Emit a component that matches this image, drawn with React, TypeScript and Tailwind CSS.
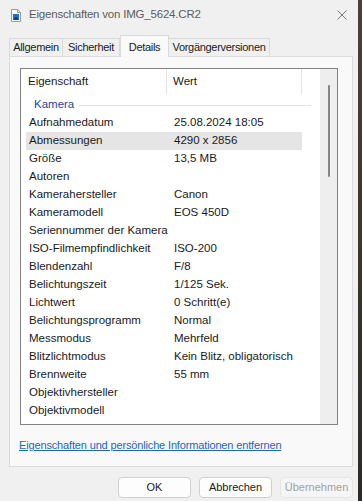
import React from 'react';

type Row = { name: string; value: string; selected?: boolean };

const rows: Row[] = [
  { name: 'Aufnahmedatum', value: '25.08.2024 18:05' },
  { name: 'Abmessungen', value: '4290 x 2856', selected: true },
  { name: 'Größe', value: '13,5 MB' },
  { name: 'Autoren', value: '' },
  { name: 'Kamerahersteller', value: 'Canon' },
  { name: 'Kameramodell', value: 'EOS 450D' },
  { name: 'Seriennummer der Kamera', value: '' },
  { name: 'ISO-Filmempfindlichkeit', value: 'ISO-200' },
  { name: 'Blendenzahl', value: 'F/8' },
  { name: 'Belichtungszeit', value: '1/125 Sek.' },
  { name: 'Lichtwert', value: '0 Schritt(e)' },
  { name: 'Belichtungsprogramm', value: 'Normal' },
  { name: 'Messmodus', value: 'Mehrfeld' },
  { name: 'Blitzlichtmodus', value: 'Kein Blitz, obligatorisch' },
  { name: 'Brennweite', value: '55 mm' },
  { name: 'Objektivhersteller', value: '' },
  { name: 'Objektivmodell', value: '' },
];

const tabs = [
  { label: 'Allgemein', w: 'w-[54px]' },
  { label: 'Sicherheit', w: 'w-[58px]' },
  { label: 'Details', w: 'w-[49px]', active: true },
  { label: 'Vorgängerversionen', w: 'w-[102px]' },
];

const FileIcon = () => (
  <svg width="10" height="13" viewBox="0 0 10 13">
    <path d="M0.5 0.5 H6.5 L9.5 3.5 V12.5 H0.5 Z" fill="#ffffff" stroke="#9a9a9a" />
    <path d="M6.5 0.5 V3.5 H9.5" fill="none" stroke="#9a9a9a" />
    <rect x="2" y="5" width="6" height="6" fill="#1d6fd0" />
    <path d="M2 11 L5 7.5 L8 11 Z" fill="#0b3f8a" />
  </svg>
);

const App: React.FC = () => {
  return (
    <div className="w-[362px] h-[501px] flex bg-[#3a342e] overflow-hidden font-['Liberation_Sans',sans-serif] text-[11.5px] text-[#1a1a1a]">
      <div className="w-[358px] h-full flex flex-col bg-[#f0f0f0]">
        {/* Title bar */}
        <div className="h-[30px] flex items-center pl-[11px] pr-[10px] shrink-0">
          <FileIcon />
          <span className="ml-[8px] text-[11.5px] tracking-[-0.2px] text-[#5c5c5c]">Eigenschaften von IMG_5624.CR2</span>
          <div className="flex-1" />
          <svg width="10" height="10" viewBox="0 0 10 10" className="mr-[1px]">
            <path d="M0.5 0.5 L9.5 9.5 M9.5 0.5 L0.5 9.5" stroke="#7a7a7a" strokeWidth="1" />
          </svg>
        </div>

        {/* Tabs */}
        <div className="h-[26px] flex items-end pl-[9px] shrink-0 text-[11px] tracking-[-0.3px]">
          {tabs.map((t) =>
            t.active ? (
              <div
                key={t.label}
                className={`${t.w} h-[22px] -mb-px relative z-10 flex items-start justify-center pt-[3px] bg-[#f9f9f9] border border-b-0 border-[#d9d9d9]`}
              >
                {t.label}
              </div>
            ) : (
              <div
                key={t.label}
                className={`${t.w} h-[18px] flex items-center justify-center bg-[#f0f0f0] border border-b-0 border-[#d9d9d9] -ml-px first:ml-0`}
              >
                {t.label}
              </div>
            )
          )}
        </div>

        {/* Panel */}
        <div className="ml-[9px] w-[344px] h-[411px] shrink-0 bg-[#f9f9f9] border border-[#dcdcdc] pl-[10px] pt-[11px]">
          <div className="w-[318px] h-[357px] border border-[#828282] bg-white flex">
            <div className="flex-1 flex flex-col">
              {/* Header */}
              <div className="h-[27px] flex items-start shrink-0">
                <div className="w-[146px] h-[25px] flex items-center pl-[7px] border-r border-[#e5e5e5]">Eigenschaft</div>
                <div className="w-[135px] h-[25px] flex items-center pl-[6px] border-r border-[#e5e5e5]">Wert</div>
              </div>
              {/* Group */}
              <div className="h-[18px] flex items-center pl-[13px] pr-[9px] shrink-0">
                <span className="text-[#24479c]">Kamera</span>
                <div className="flex-1 ml-[5px] h-px bg-[#e3e3e3]" />
              </div>
              {/* Rows */}
              <div className="pl-[5px] flex flex-col">
                {rows.map((r) => (
                  <div
                    key={r.name}
                    className={`w-[276px] h-[18px] flex items-center pl-[3px] ${r.selected ? 'bg-[#e5e5e5]' : ''}`}
                  >
                    <span className="w-[145px] whitespace-nowrap">{r.name}</span>
                    <span className="whitespace-nowrap">{r.value}</span>
                  </div>
                ))}
              </div>
            </div>
            {/* Scrollbar */}
            <div className="w-[17px] bg-[#eeeeee] flex justify-center pt-[16px]">
              <div className="w-[2px] h-[92px] rounded-full bg-[#858585]" />
            </div>
          </div>
          <div className="mt-[12px] -ml-[1px] text-[11px] tracking-[-0.15px]">
            <span className="text-[#1a66c2] underline">Eigenschaften und persönliche Informationen entfernen</span>
          </div>
        </div>

        {/* Buttons */}
        <div className="flex justify-end gap-[8px] pr-[5px] mt-[10px] text-[11px]">
          <div className="w-[73px] h-[21px] flex items-center justify-center rounded-[4px] bg-[#fdfdfd] border border-[#d0d0d0]">OK</div>
          <div className="w-[73px] h-[21px] flex items-center justify-center rounded-[4px] bg-[#fdfdfd] border border-[#d0d0d0]">Abbrechen</div>
          <div className="w-[73px] h-[21px] flex items-center justify-center rounded-[4px] bg-[#f5f5f5] border border-[#e6e6e6] text-[#a2a2a2]">Übernehmen</div>
        </div>
      </div>
      <div className="flex-1 bg-gradient-to-b from-[#4a4036] to-[#2e2924]" />
    </div>
  );
};

export default App;
